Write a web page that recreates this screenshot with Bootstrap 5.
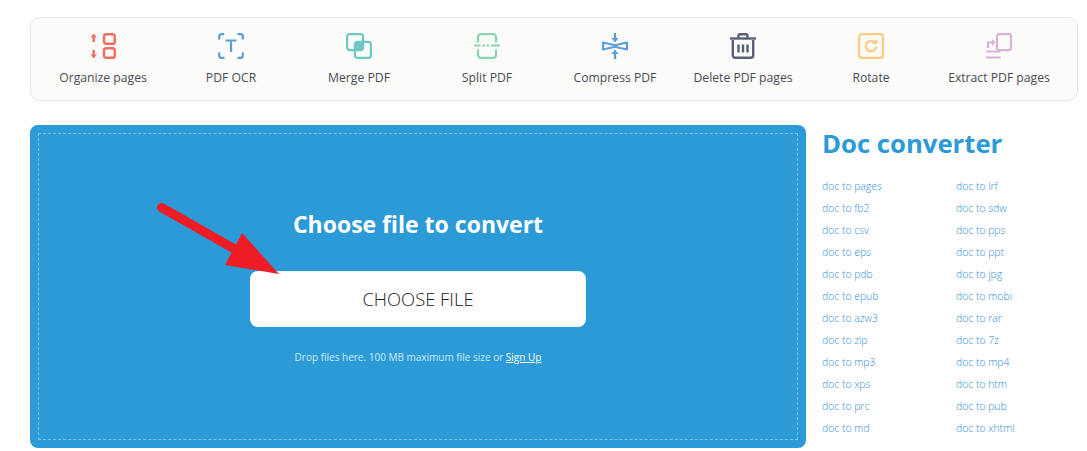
<!DOCTYPE html>
<html lang="en">

<head>
   <meta charset="UTF-8">
   <title>Doc converter</title>
   <link href="https://cdn.jsdelivr.net/npm/bootstrap@5.3.0/dist/css/bootstrap.min.css" rel="stylesheet">
   <style>
      body {
         font-family: "Open Sans", "Noto Sans", sans-serif;
         background: #fff;
      }

      .page-wrap {
         padding: 17px 9px 0 30px;
      }

      .tool-bar {
         height: 84px;
         padding: 0 14px 0 8px;
         background: #fbfbf9;
         border: 1px solid #e6e6e4;
         border-radius: 10px;
      }

      .tool-item {
         width: 128px;
         padding-top: 15px;
         color: #4a4a55;
         font-size: 12.2px;
         line-height: 16px;
         text-decoration: none;
         white-space: nowrap;
      }

      .tool-item svg {
         display: block;
         margin-bottom: 11px;
      }

      .main-part {
         margin-top: 24px;
      }

      .upload-box {
         width: 776px;
         height: 323px;
         padding: 8px;
         background: #2b9ad6;
         border-radius: 8px;
      }

      .upload-inner {
         height: 100%;
         padding-top: 75px;
         border: 1px dashed #7cc3ea;
      }

      .upload-title {
         font-size: 23px;
         line-height: 30px;
         font-weight: 700;
         margin: 0 0 32px;
      }

      .choose-btn {
         width: 336px;
         height: 56px;
         padding-top: 6px;
         background: #fff;
         color: #1c1c1c;
         border: 0;
         border-radius: 8px;
         font-size: 18.4px;
         font-weight: 300;
      }

      .choose-btn:hover {
         background: #fff;
         color: #1c1c1c;
      }

      .drop-note {
         margin: 22px 0 0;
         font-size: 10px;
         line-height: 16px;
         color: #cdeafa;
      }

      .drop-note a {
         color: #fff;
      }

      .big-arrow {
         position: absolute;
         left: 0;
         top: 0;
      }

      .side-part {
         width: 256px;
         margin-left: 16px;
      }

      .side-title {
         margin: 0 0 12px;
         color: #2b9ad6;
         font-size: 25.7px;
         line-height: 38px;
         font-weight: 700;
      }

      .conv-list {
         display: grid;
         grid-template-columns: 134px 122px;
         grid-auto-rows: 22px;
      }

      .conv-list a {
         color: #2a8fd8;
         font-size: 10.4px;
         line-height: 22px;
         font-weight: 300;
         text-decoration: none;
      }
   </style>
</head>

<body>

   <div class="page-wrap">
      <nav class="tool-bar d-flex">
         <a href="#" class="tool-item d-flex flex-column align-items-center">
            <svg width="26" height="26" viewBox="0 0 26 26" fill="none" stroke="#f26c5b" stroke-width="2.4">
               <rect x="14" y="1.2" width="10.8" height="9.6" rx="2.4" />
               <rect x="14" y="15.2" width="10.8" height="9.6" rx="2.4" />
               <path d="M3.7 9V3M3.7 17v6" />
               <path d="M.6 4.5 3.7.6l3.1 3.9zM.6 21.5l3.1 3.9 3.1-3.9z" fill="#f26c5b" stroke="none" />
            </svg>
            <span>Organize pages</span>
         </a>
         <a href="#" class="tool-item d-flex flex-column align-items-center">
            <svg width="26" height="26" viewBox="0 0 26 26" fill="none" stroke="#5b9fd8" stroke-width="2.2">
               <path d="M1.2 6.5V3.2a2 2 0 0 1 2-2h3M19.5 1.2h3.3a2 2 0 0 1 2 2v3.3M24.8 19.5v3.3a2 2 0 0 1-2 2h-3.3M6.5 24.8H3.2a2 2 0 0 1-2-2v-3.3" />
               <path d="M7.5 7.5h11M13 7.5v11.5" />
            </svg>
            <span>PDF OCR</span>
         </a>
         <a href="#" class="tool-item d-flex flex-column align-items-center">
            <svg width="26" height="26" viewBox="0 0 26 26" fill="none" stroke="#6cc9c4" stroke-width="2.2">
               <rect x="8.8" y="8.8" width="8.4" height="8.4" fill="#6cc9c4" stroke="none" rx="1" />
               <rect x="1.1" y="1.1" width="16" height="16" rx="2.5" />
               <rect x="8.9" y="8.9" width="16" height="16" rx="2.5" />
            </svg>
            <span>Merge PDF</span>
         </a>
         <a href="#" class="tool-item d-flex flex-column align-items-center">
            <svg width="26" height="26" viewBox="0 0 26 26" fill="none" stroke="#8bd5b2" stroke-width="2.2">
               <path d="M4 9.500V4a2.900 2.900 0 0 1 2.900-2.900h12.200A2.900 2.900 0 0 1 22 4v5.500M4 16.500V22a2.900 2.900 0 0 0 2.900 2.900h12.200A2.900 2.900 0 0 0 22 22v-5.500" />
               <path d="M0 12.500h6.500M8.500 12.500h2.500M12.500 12.500h2.500M17 12.500h9" />
            </svg>
            <span>Split PDF</span>
         </a>
         <a href="#" class="tool-item d-flex flex-column align-items-center">
            <svg width="26" height="26" viewBox="0 0 26 26" fill="none" stroke="#5b9fd8" stroke-width="2.2">
               <path d="M1.100 9.500 13 12.200l11.900-2.700v7L13 13.800 1.100 16.500z" stroke-linejoin="round" />
               <path d="M13 0v6M13 20v6" />
               <path d="M9.500 5 13 9.500 16.500 5zM9.500 21 13 16.500l3.500 4.500z" fill="#5b9fd8" stroke="none" />
            </svg>
            <span>Compress PDF</span>
         </a>
         <a href="#" class="tool-item d-flex flex-column align-items-center">
            <svg width="26" height="26" viewBox="0 0 26 26" fill="none" stroke="#5a6079" stroke-width="2.4">
               <path d="M0 5.500h26" />
               <path d="M8.500 5V2.500a1.300 1.300 0 0 1 1.300-1.300h6.400a1.300 1.300 0 0 1 1.300 1.300V5" />
               <path d="M2.800 7v15.500a2.300 2.300 0 0 0 2.300 2.300h15.800a2.300 2.300 0 0 0 2.300-2.300V7" />
               <path d="M8.500 11.500v8M13 11.500v8M17.500 11.500v8" />
            </svg>
            <span>Delete PDF pages</span>
         </a>
         <a href="#" class="tool-item d-flex flex-column align-items-center">
            <svg width="26" height="26" viewBox="0 0 26 26" fill="none" stroke="#fdcb82" stroke-width="2.2">
               <rect x="1.100" y="1.100" width="23.800" height="23.800" rx="2.500" />
               <path d="M16.500 9.200A5.200 5.200 0 1 0 18.200 13.500" stroke-width="2.400" />
               <path d="M13.500 11h6V5.500z" fill="#fdcb82" stroke="none" />
            </svg>
            <span>Rotate</span>
         </a>
         <a href="#" class="tool-item d-flex flex-column align-items-center">
            <svg width="26" height="26" viewBox="0 0 26 26" fill="none" stroke="#d9b2d9" stroke-width="2.200">
               <rect x="11" y="1.100" width="13.900" height="16" rx="2" />
               <path d="M2 15V9.500h5" />
               <path d="M6 6 9.500 9.500 6 13z" fill="#d9b2d9" stroke="none" />
               <path d="M0 18.500h14.500M0 24.500h14.500" />
            </svg>
            <span>Extract PDF pages</span>
         </a>
      </nav>

      <div class="main-part d-flex">
         <section class="upload-box position-relative">
            <div class="upload-inner text-center text-white">
               <h2 class="upload-title">Choose file to convert</h2>
               <button type="button" class="btn choose-btn">CHOOSE FILE</button>
               <p class="drop-note">Drop files here. 100 MB maximum file size or <a href="#">Sign Up</a></p>
            </div>
            <svg class="big-arrow" width="776" height="323" viewBox="0 0 776 323">
               <path d="M131.500 82.500 215 130" stroke="#ee1c25" stroke-width="9" stroke-linecap="round" />
               <path d="M212 108 249 149 195 140z" fill="#ee1c25" />
            </svg>
         </section>

         <aside class="side-part">
            <h2 class="side-title">Doc converter</h2>
            <div class="conv-list" id="conv-list"></div>
         </aside>
      </div>
   </div>

   <script>
      const formati = ["pages", "lrf", "fb2", "sdw", "csv", "pps", "eps", "ppt", "pdb", "jpg", "epub", "mobi",
         "azw3", "rar", "zip", "7z", "mp3", "mp4", "xps", "htm", "prc", "pub", "md", "xhtml"];
      const lista = document.getElementById("conv-list");
      formati.forEach(f => {
         const a = document.createElement("a");
         a.href = "#";
         a.textContent = `doc to ${f}`;
         lista.appendChild(a);
      });
   </script>
   <script src="https://cdn.jsdelivr.net/npm/bootstrap@5.3.0/dist/js/bootstrap.bundle.min.js"></script>

</body>

</html>
